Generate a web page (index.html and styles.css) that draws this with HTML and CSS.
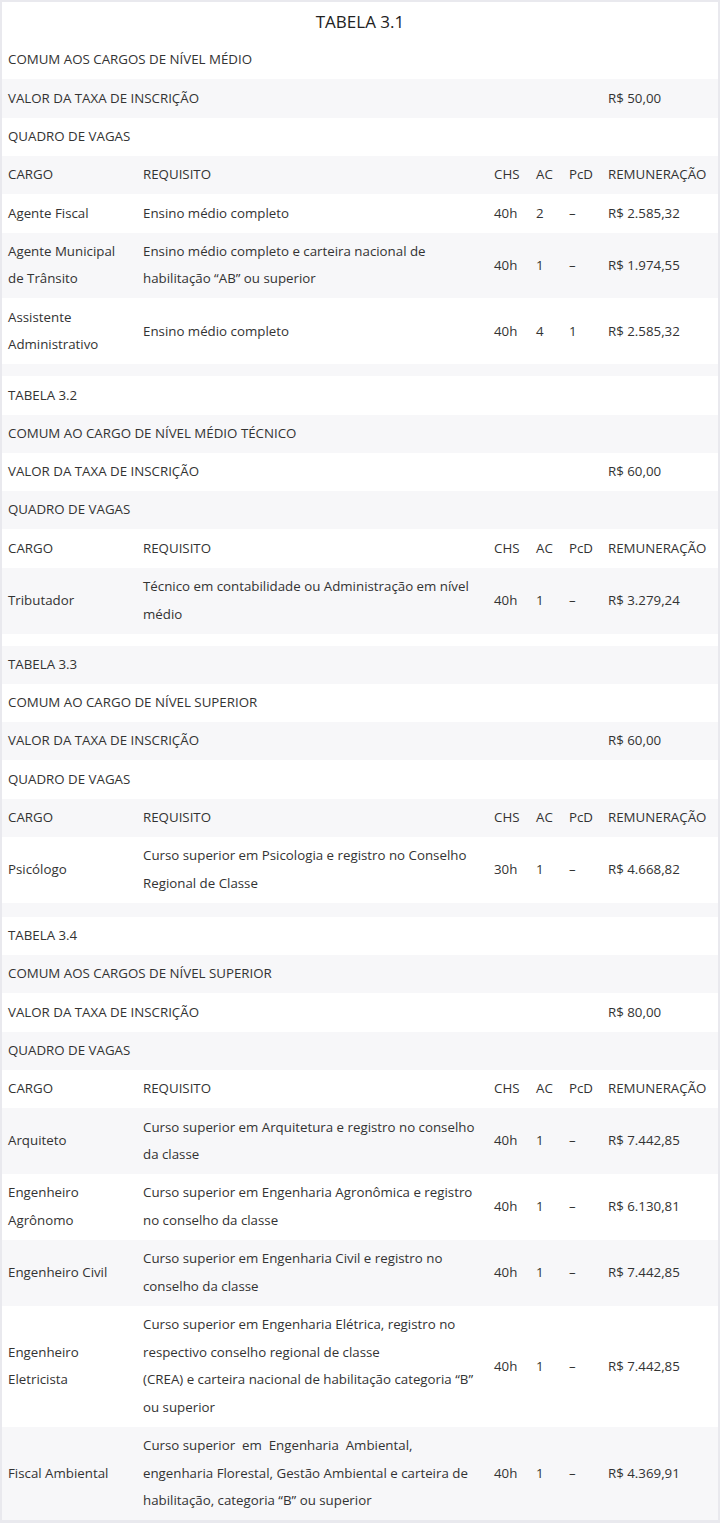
FILE: index.html
```html
<!DOCTYPE html>
<html lang="pt-BR">
<head>
<meta charset="utf-8">
<title>Tabelas</title>
<link rel="stylesheet" href="styles.css">
</head>
<body>
<div class="frame">
<table class="vagas">
  <colgroup>
    <col class="c-cargo"><col class="c-req"><col class="c-chs"><col class="c-ac"><col class="c-pcd"><col class="c-rem">
  </colgroup>
  <thead>
    <tr><th colspan="6" class="title">TABELA 3.1</th></tr>
  </thead>
  <tbody>
    <tr><td colspan="6">COMUM AOS CARGOS DE NÍVEL MÉDIO</td></tr>
    <tr><td colspan="5">VALOR DA TAXA DE INSCRIÇÃO</td><td>R$ 50,00</td></tr>
    <tr><td colspan="6">QUADRO DE VAGAS</td></tr>
    <tr><td>CARGO</td><td>REQUISITO</td><td>CHS</td><td>AC</td><td>PcD</td><td>REMUNERAÇÃO</td></tr>
    <tr><td>Agente Fiscal</td><td>Ensino médio completo</td><td>40h</td><td>2</td><td>–</td><td>R$ 2.585,32</td></tr>
    <tr><td>Agente Municipal de Trânsito</td><td>Ensino médio completo e carteira nacional de habilitação “AB” ou superior</td><td>40h</td><td>1</td><td>–</td><td>R$ 1.974,55</td></tr>
    <tr><td>Assistente Administrativo</td><td>Ensino médio completo</td><td>40h</td><td>4</td><td>1</td><td>R$ 2.585,32</td></tr>
    <tr class="gap"><td colspan="6"></td></tr>

    <tr><td colspan="6">TABELA 3.2</td></tr>
    <tr><td colspan="6">COMUM AO CARGO DE NÍVEL MÉDIO TÉCNICO</td></tr>
    <tr><td colspan="5">VALOR DA TAXA DE INSCRIÇÃO</td><td>R$ 60,00</td></tr>
    <tr><td colspan="6">QUADRO DE VAGAS</td></tr>
    <tr><td>CARGO</td><td>REQUISITO</td><td>CHS</td><td>AC</td><td>PcD</td><td>REMUNERAÇÃO</td></tr>
    <tr><td>Tributador</td><td>Técnico em contabilidade ou Administração em nível médio</td><td>40h</td><td>1</td><td>–</td><td>R$ 3.279,24</td></tr>
    <tr class="gap"><td colspan="6"></td></tr>

    <tr><td colspan="6">TABELA 3.3</td></tr>
    <tr><td colspan="6">COMUM AO CARGO DE NÍVEL SUPERIOR</td></tr>
    <tr><td colspan="5">VALOR DA TAXA DE INSCRIÇÃO</td><td>R$ 60,00</td></tr>
    <tr><td colspan="6">QUADRO DE VAGAS</td></tr>
    <tr><td>CARGO</td><td>REQUISITO</td><td>CHS</td><td>AC</td><td>PcD</td><td>REMUNERAÇÃO</td></tr>
    <tr><td>Psicólogo</td><td>Curso superior em Psicologia e registro no Conselho Regional de Classe</td><td>30h</td><td>1</td><td>–</td><td>R$ 4.668,82</td></tr>
    <tr class="gap gap-lg"><td colspan="6"></td></tr>

    <tr><td colspan="6">TABELA 3.4</td></tr>
    <tr><td colspan="6">COMUM AOS CARGOS DE NÍVEL SUPERIOR</td></tr>
    <tr><td colspan="5">VALOR DA TAXA DE INSCRIÇÃO</td><td>R$ 80,00</td></tr>
    <tr><td colspan="6">QUADRO DE VAGAS</td></tr>
    <tr><td>CARGO</td><td>REQUISITO</td><td>CHS</td><td>AC</td><td>PcD</td><td>REMUNERAÇÃO</td></tr>
    <tr><td>Arquiteto</td><td>Curso superior em Arquitetura e registro no conselho da classe</td><td>40h</td><td>1</td><td>–</td><td>R$ 7.442,85</td></tr>
    <tr><td>Engenheiro Agrônomo</td><td>Curso superior em Engenharia Agronômica e registro no conselho da classe</td><td>40h</td><td>1</td><td>–</td><td>R$ 6.130,81</td></tr>
    <tr><td>Engenheiro Civil</td><td>Curso superior em Engenharia Civil e registro no conselho da classe</td><td>40h</td><td>1</td><td>–</td><td>R$ 7.442,85</td></tr>
    <tr><td>Engenheiro Eletricista</td><td>Curso superior em Engenharia Elétrica, registro no respectivo conselho regional de classe<br>(CREA) e carteira nacional de habilitação categoria “B” ou superior</td><td>40h</td><td>1</td><td>–</td><td>R$ 7.442,85</td></tr>
    <tr><td>Fiscal Ambiental</td><td>Curso superior&nbsp; em&nbsp; Engenharia&nbsp; Ambiental, engenharia Florestal, Gestão Ambiental e carteira de habilitação, categoria “B” ou superior</td><td>40h</td><td>1</td><td>–</td><td>R$ 4.369,91</td></tr>
  </tbody>
</table>
</div>
</body>
</html>
```

FILE: styles.css
```css
html, body {
  margin: 0;
  padding: 0;
  background: #e9e9ee;
}

.frame {
  padding: 2px;
  background: #e9e9ee;
}

.vagas {
  width: 716px;
  table-layout: fixed;
  border-collapse: collapse;
  border-spacing: 0;
  background: #ffffff;
  font-family: "Open Sans", "Liberation Sans", sans-serif;
  font-size: 13.3px;
  line-height: 27.6px;
  color: #333333;
}

.c-cargo { width: 135px; }
.c-req { width: 351px; }
.c-chs { width: 42px; }
.c-ac { width: 33px; }
.c-pcd { width: 39px; }
.c-rem { width: 116px; }

.vagas th,
.vagas td {
  padding: 5.35px 6px;
  text-align: left;
  vertical-align: middle;
  font-weight: 400;
}

.vagas td:nth-child(2) {
  padding-right: 10px;
}

.vagas .title {
  padding-top: 6px;
  padding-bottom: 5.5px;
  text-align: center;
  font-size: 17px;
  color: #222222;
}

.vagas tbody tr:nth-child(even) {
  background: #f7f7f9;
}

.vagas tr.gap td {
  padding: 0;
  height: 12px;
  line-height: 0;
}

.vagas tr.gap-lg td {
  height: 14px;
}
```
